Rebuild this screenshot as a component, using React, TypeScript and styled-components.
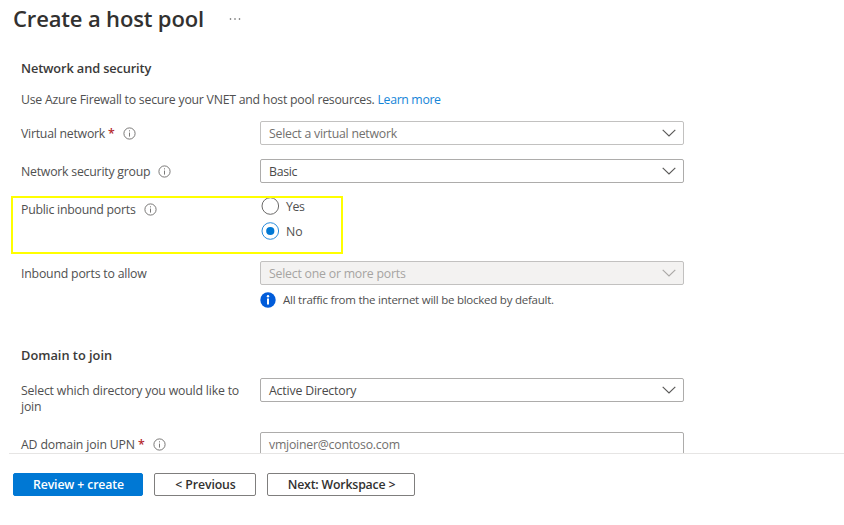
import React from "react";
import styled, { createGlobalStyle } from "styled-components";

const GlobalStyle = createGlobalStyle`
  * { box-sizing: border-box; }
  body {
    margin: 0;
    background: #fff;
    color: #505050;
    font-family: "Open Sans", "Noto Sans", sans-serif;
    font-size: 12.3px;
    line-height: 17px;
    overflow: hidden;
  }
`;

const Page = styled.div`
  width: 844px;
  height: 525px;
  display: flex;
  flex-direction: column;
  overflow: hidden;
`;

const Header = styled.header`
  height: 38px;
  flex: none;
  display: flex;
  align-items: center;
  gap: 25px;
  padding-left: 13px;
`;

const Title = styled.h1`
  margin: 0 0 2px;
  width: 191px;
  font-size: 22px;
  line-height: 30px;
  font-weight: 600;
  letter-spacing: -0.15px;
  color: #323130;
  white-space: nowrap;
`;

const MoreIcon = styled.svg`
  width: 12px;
  height: 2px;
  fill: #555;
`;

const Form = styled.main`
  height: 415px;
  flex: none;
  overflow: hidden;
  padding: 22px 0 0 21px;
`;

const SectionTitle = styled.h2<{ $top?: number; $track?: number }>`
  margin: ${(p) => p.$top ?? 0}px 0 0;
  font-size: 12.8px;
  line-height: 17px;
  font-weight: 600;
  letter-spacing: ${(p) => p.$track ?? 0}px;
  color: #3b3a39;
`;

const Intro = styled.p`
  margin: 14px 0 0;
  letter-spacing: -0.245px;
  white-space: nowrap;
`;

const Link = styled.a`
  color: #1585d8;
  letter-spacing: -0.35px;
`;

const Row = styled.div<{ $top: number }>`
  display: grid;
  grid-template-columns: 239px 424px;
  align-items: start;
  margin-top: ${(p) => p.$top}px;
`;

const Label = styled.div`
  display: flex;
  align-items: center;
  padding-top: 5px;
  line-height: 16px;
`;

const Text = styled.span<{ $track: number }>`
  letter-spacing: ${(p) => p.$track}px;
`;

const Required = styled.span`
  color: #b4262c;
  font-weight: 600;
  margin-left: 3px;
  width: 7px;
`;

const InfoOutline = styled.svg`
  width: 13px;
  height: 13px;
  margin: 0 0 1px 8px;
  flex: none;
`;

const Field = styled.div<{ $disabled?: boolean; $placeholder?: boolean; $light?: boolean }>`
  height: 24px;
  display: flex;
  align-items: center;
  justify-content: space-between;
  padding: 1px 7px 0 8px;
  border: 1px solid ${(p) => (p.$disabled || p.$light ? "#c2c1c0" : "#adacab")};
  border-radius: 2px;
  background: ${(p) => (p.$disabled ? "#f3f2f1" : "#fff")};
  color: ${(p) => (p.$disabled ? "#a6a4a2" : p.$placeholder ? "#72706e" : "#4a4a4a")};
`;

const Chevron = styled.svg<{ $disabled?: boolean }>`
  width: 14px;
  height: 8px;
  margin-bottom: 1px;
  fill: none;
  stroke: ${(p) => (p.$disabled ? "#aaa8a6" : "#5a5958")};
  stroke-width: 1.15;
`;

const Radios = styled.div`
  display: flex;
  flex-direction: column;
  gap: 7px;
`;

const RadioOption = styled.div`
  height: 18px;
  display: flex;
  align-items: center;
  gap: 7px;
  padding-left: 1px;
`;

const RadioIcon = styled.svg`
  width: 18px;
  height: 18px;
`;

const Notice = styled.div`
  display: flex;
  align-items: center;
  gap: 7px;
  margin-top: 6px;
  font-size: 11.5px;
  letter-spacing: -0.24px;
`;

const NoticeIcon = styled.svg`
  width: 16px;
  height: 16px;
`;

const PortsRow = styled(Row)`
  position: relative;
`;

const Highlight = styled.div`
  position: absolute;
  left: -10px;
  top: -1px;
  width: 332px;
  height: 58px;
  border: 2px solid #ffff00;
`;

const Footer = styled.footer`
  flex: 1;
  display: flex;
  align-items: flex-start;
  gap: 11px;
  margin-left: 9px;
  padding: 19px 0 0 4px;
  border-top: 1px solid #e6e5e4;
`;

const Button = styled.button<{ $primary?: boolean; $width: number; $track: number }>`
  width: ${(p) => p.$width}px;
  height: 23px;
  padding: 0 0 1px 1px;
  border: 1px solid ${(p) => (p.$primary ? "#0078d4" : "#7f7e7d")};
  border-radius: 2px;
  background: ${(p) => (p.$primary ? "#0078d4" : "#fff")};
  color: ${(p) => (p.$primary ? "#fff" : "#323130")};
  font: 600 12.3px/17px "Open Sans", "Noto Sans", sans-serif;
  letter-spacing: ${(p) => p.$track}px;
  white-space: nowrap;
`;

const Info = () => (
  <InfoOutline viewBox="0 0 13 13">
    <circle cx="6.5" cy="6.5" r="5.6" fill="none" stroke="#6b6a69" strokeWidth="0.9" />
    <path d="M6.5 5.6V9.6M6.5 3.3V4.4" stroke="#6b6a69" strokeWidth="0.9" />
  </InfoOutline>
);

const Caret = ({ disabled }: { disabled?: boolean }) => (
  <Chevron $disabled={disabled} viewBox="0 0 14 8">
    <path d="M0.7 0.9L7 7L13.3 0.9" />
  </Chevron>
);

const Radio = ({ checked }: { checked?: boolean }) => (
  <RadioIcon viewBox="0 0 18 18">
    <circle cx="9.3" cy="9" r="8.3" fill="#fff" stroke={checked ? "#2b8cdb" : "#6b6a69"} strokeWidth="1" />
    {checked && <circle cx="9.3" cy="9" r="4.1" fill="#0078d4" />}
  </RadioIcon>
);

export default function App() {
  return (
    <Page>
      <GlobalStyle />
      <Header>
        <Title>Create a host pool</Title>
        <MoreIcon viewBox="0 0 12 2">
          <circle cx="1.5" cy="1" r="0.8" />
          <circle cx="6" cy="1" r="0.8" />
          <circle cx="10.5" cy="1" r="0.8" />
        </MoreIcon>
      </Header>
      <Form>
        <SectionTitle $track={-0.13}>Network and security</SectionTitle>
        <Intro>
          Use Azure Firewall to secure your VNET and host pool resources. <Link>Learn more</Link>
        </Intro>
        <Row $top={13}>
          <Label>
            <Text $track={-0.25}>Virtual network</Text>
            <Required>*</Required>
            <Info />
          </Label>
          <Field $placeholder $light>
            <Text $track={-0.24}>Select a virtual network</Text>
            <Caret />
          </Field>
        </Row>
        <Row $top={14}>
          <Label>
            <Text $track={-0.23}>Network security group</Text>
            <Info />
          </Label>
          <Field>
            <Text $track={-0.3}>Basic</Text>
            <Caret />
          </Field>
        </Row>
        <PortsRow $top={14}>
          <Label>
            <Text $track={-0.24}>Public inbound ports</Text>
            <Info />
          </Label>
          <Radios>
            <RadioOption>
              <Radio />
              <Text $track={-0.4}>Yes</Text>
            </RadioOption>
            <RadioOption>
              <Radio checked />
              <Text $track={0}>No</Text>
            </RadioOption>
          </Radios>
          <Highlight />
        </PortsRow>
        <Row $top={21}>
          <Label>
            <Text $track={-0.2}>Inbound ports to allow</Text>
          </Label>
          <div>
            <Field $disabled>
              <Text $track={-0.22}>Select one or more ports</Text>
              <Caret disabled />
            </Field>
            <Notice>
              <NoticeIcon viewBox="0 0 16 16">
                <circle cx="8" cy="8" r="7.7" fill="#015cda" />
                <circle cx="8" cy="4.3" r="1.2" fill="#fff" />
                <path d="M8 6.5V12.6" stroke="#fff" strokeWidth="2" />
              </NoticeIcon>
              <span>All traffic from the internet will be blocked by default.</span>
            </Notice>
          </div>
        </Row>
        <SectionTitle $top={39}>Domain to join</SectionTitle>
        <Row $top={14}>
          <Label>
            <Text $track={-0.19}>
              Select which directory you would like to
              <br />
              join
            </Text>
          </Label>
          <Field>
            <Text $track={-0.18}>Active Directory</Text>
            <Caret />
          </Field>
        </Row>
        <Row $top={17}>
          <Label>
            <Text $track={-0.16}>AD domain join UPN</Text>
            <Required>*</Required>
            <Info />
          </Label>
          <Field $placeholder>
            <Text $track={-0.23}>vmjoiner@contoso.com</Text>
          </Field>
        </Row>
      </Form>
      <Footer>
        <Button $primary $width={130} $track={-0.14}>Review + create</Button>
        <Button $width={102} $track={-0.12}>&lt; Previous</Button>
        <Button $width={148} $track={-0.18}>Next: Workspace &gt;</Button>
      </Footer>
    </Page>
  );
}
